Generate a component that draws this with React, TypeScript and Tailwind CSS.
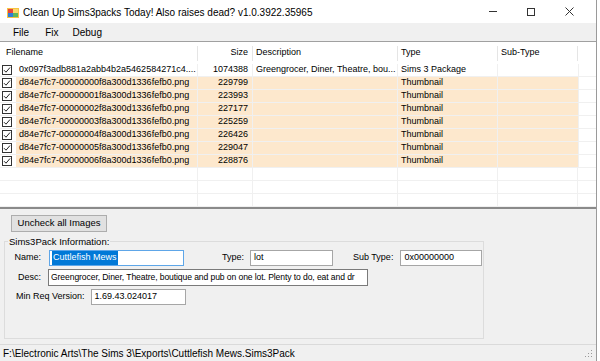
import React from "react"

const rows = [
  { name: "0x097f3adb881a2abb4b2a5462584271c4....", size: "1074388", desc: "Greengrocer, Diner, Theatre, bou...", type: "Sims 3 Package", img: false },
  { name: "d84e7fc7-00000000f8a300d1336fefb0.png", size: "229799", desc: "", type: "Thumbnail", img: true },
  { name: "d84e7fc7-00000001f8a300d1336fefb0.png", size: "223993", desc: "", type: "Thumbnail", img: true },
  { name: "d84e7fc7-00000002f8a300d1336fefb0.png", size: "227177", desc: "", type: "Thumbnail", img: true },
  { name: "d84e7fc7-00000003f8a300d1336fefb0.png", size: "225259", desc: "", type: "Thumbnail", img: true },
  { name: "d84e7fc7-00000004f8a300d1336fefb0.png", size: "226426", desc: "", type: "Thumbnail", img: true },
  { name: "d84e7fc7-00000005f8a300d1336fefb0.png", size: "229047", desc: "", type: "Thumbnail", img: true },
  { name: "d84e7fc7-00000006f8a300d1336fefb0.png", size: "228876", desc: "", type: "Thumbnail", img: true },
]

function Check() {
  return (
    <div className="w-[10px] h-[10px] border border-[#333] bg-white flex items-center justify-center shrink-0">
      <svg width="8" height="8" viewBox="0 0 8 8">
        <path d="M1 4.2 L3 6.2 L7 1.5" fill="none" stroke="#222" strokeWidth="1" />
      </svg>
    </div>
  )
}

function AppIcon() {
  return (
    <svg width="12" height="10" viewBox="0 0 12 10">
      <rect x="0" y="0" width="12" height="10" fill="#f6c343" />
      <rect x="1" y="1" width="5" height="4" fill="#e8463a" />
      <rect x="6" y="1" width="5" height="4" fill="#f9d86a" />
      <rect x="1" y="5" width="5" height="4" fill="#2f7fd8" />
      <rect x="6" y="5" width="5" height="4" fill="#5cb85c" />
    </svg>
  )
}

export default function App() {
  return (
    <div
      className="w-[600px] h-[361px] bg-white overflow-hidden text-black"
      style={{ fontFamily: '"Liberation Sans", Arial, sans-serif' }}
    >
      <div className="w-[597px] h-full border-r border-[#9a9a9a] flex flex-col">
        {/* Title bar */}
        <div className="h-[23px] bg-white flex items-center shrink-0">
          <div className="ml-[7px] mt-[2px]">
            <AppIcon />
          </div>
          <span className="ml-[4px] text-[10px] mt-[2px]">Clean Up Sims3packs Today! Also raises dead? v1.0.3922.35965</span>
          <div className="ml-auto flex items-center h-full">
            <div className="w-[38px] flex justify-center">
              <div className="w-[8px] h-px bg-[#333]" />
            </div>
            <div className="w-[38px] flex justify-center">
              <div className="w-[8px] h-[8px] border border-[#333]" />
            </div>
            <div className="w-[38px] flex justify-center mr-[8px]">
              <svg width="9" height="9" viewBox="0 0 9 9">
                <path d="M0.5 0.5 L8.5 8.5 M8.5 0.5 L0.5 8.5" stroke="#333" strokeWidth="1" />
              </svg>
            </div>
          </div>
        </div>

        {/* Menu bar */}
        <div className="h-[18px] bg-[#f0f0f0] flex items-center text-[10px] shrink-0">
          <span className="ml-[13px]">File</span>
          <span className="ml-[16px]">Fix</span>
          <span className="ml-[14px]">Debug</span>
        </div>

        {/* List view */}
        <div className="h-[168px] border-t border-[#a0a0a0] border-b-2 border-b-[#8a8a8a] bg-white text-[9px] shrink-0 overflow-hidden">
          <div className="h-[22px] flex items-center">
            <div className="w-[197px] pl-[6px]">Filename</div>
            <div className="w-[55px] h-[15px] border-l border-[#e5e5e5] flex items-center justify-end pr-[4px]">Size</div>
            <div className="w-[145px] h-[15px] border-l border-[#e5e5e5] flex items-center pl-[3px]">Description</div>
            <div className="w-[100px] h-[15px] border-l border-[#e5e5e5] flex items-center pl-[3px]">Type</div>
            <div className="w-[80px] h-[15px] border-l border-[#e5e5e5] flex items-center pl-[3px]">Sub-Type</div>
            <div className="w-[18px] h-[15px] border-l border-[#e5e5e5]" />
          </div>
          {rows.map((r) => (
            <div key={r.name} className="h-[13px] flex items-stretch border-b border-[#f0f0f0]">
              <div className="w-[16px] flex items-center pl-[2px]">
                <Check />
              </div>
              <div className={`flex flex-1 ${r.img ? "bg-[#fde8cd]" : ""}`}>
                <div className="w-[181px] flex items-center pl-[3px] whitespace-nowrap overflow-hidden">{r.name}</div>
                <div className="w-[55px] border-l border-[#f0f0f0] flex items-center justify-end pr-[4px]">{r.size}</div>
                <div className="w-[145px] border-l border-[#f0f0f0] flex items-center pl-[3px] whitespace-nowrap overflow-hidden">{r.desc}</div>
                <div className="w-[100px] border-l border-[#f0f0f0] flex items-center pl-[3px]">{r.type}</div>
                <div className="w-[80px] border-l border-[#f0f0f0]" />
              </div>
              <div className="w-[18px] border-l border-[#f0f0f0]" />
            </div>
          ))}
          {[0, 1, 2].map((i) => (
            <div key={i} className="h-[13px] flex border-b border-[#f0f0f0]">
              <div className="w-[197px]" />
              <div className="w-[55px] border-l border-[#f0f0f0]" />
              <div className="w-[145px] border-l border-[#f0f0f0]" />
              <div className="w-[100px] border-l border-[#f0f0f0]" />
              <div className="w-[80px] border-l border-[#f0f0f0]" />
              <div className="w-[18px] border-l border-[#f0f0f0]" />
            </div>
          ))}
        </div>

        {/* Bottom panel */}
        <div className="flex-1 bg-[#f0f0f0] flex flex-col text-[9px]">
          <div className="flex-1 pl-[4px]">
            <button className="mt-[6px] ml-[7px] w-[96px] h-[17px] bg-[#e1e1e1] border border-[#adadad] text-[9.5px]">
              Uncheck all Images
            </button>
            <div className="relative mt-[9px] w-[480px] h-[98px] border border-[#dcdcdc]">
              <span className="absolute -top-[7px] left-[3px] bg-[#f0f0f0] px-px text-[9.5px]">Sims3Pack Information:</span>
              <div className="flex items-center mt-[8px]">
                <span className="w-[36px] text-right">Name:</span>
                <div className="ml-[8px] w-[135px] h-[16px] bg-white border border-[#5ea6e8] flex items-center pl-[2px]">
                  <span className="bg-[#0078d7] text-white px-px">Cuttlefish Mews</span>
                </div>
                <span className="ml-[38px]">Type:</span>
                <div className="ml-[6px] w-[83px] h-[16px] bg-white border border-[#a6a6a6] flex items-center pl-[3px]">lot</div>
                <span className="ml-[20px]">Sub Type:</span>
                <div className="ml-[7px] w-[82px] h-[16px] bg-white border border-[#a6a6a6] flex items-center pl-[3px]">0x00000000</div>
              </div>
              <div className="flex items-center mt-[3px]">
                <span className="w-[36px] text-right">Desc:</span>
                <div className="ml-[7px] w-[320px] h-[17px] bg-white border border-[#7a7a7a] flex items-center pl-[2px] whitespace-nowrap text-[8.6px] tracking-[-0.1px]">
                  Greengrocer, Diner, Theatre, boutique and pub on one lot. Plenty to do, eat and dr
                </div>
              </div>
              <div className="flex items-center mt-[3px]">
                <span className="ml-[11px]">Min Req Version:</span>
                <div className="ml-[6px] w-[95px] h-[16px] bg-white border border-[#a6a6a6] flex items-center pl-[3px]">1.69.43.024017</div>
              </div>
            </div>
          </div>
          {/* Status bar */}
          <div className="h-[17px] border-t border-[#dadada] flex items-center text-[10px] relative">
            <span className="ml-[3px]">F:\Electronic Arts\The Sims 3\Exports\Cuttlefish Mews.Sims3Pack</span>
            <svg className="absolute right-[3px] bottom-[3px]" width="8" height="8" viewBox="0 0 8 8">
              <rect x="6" y="0" width="1" height="1" fill="#999" />
              <rect x="3" y="3" width="1" height="1" fill="#999" />
              <rect x="6" y="3" width="1" height="1" fill="#999" />
              <rect x="0" y="6" width="1" height="1" fill="#999" />
              <rect x="3" y="6" width="1" height="1" fill="#999" />
              <rect x="6" y="6" width="1" height="1" fill="#999" />
            </svg>
          </div>
        </div>
      </div>
    </div>
  )
}
